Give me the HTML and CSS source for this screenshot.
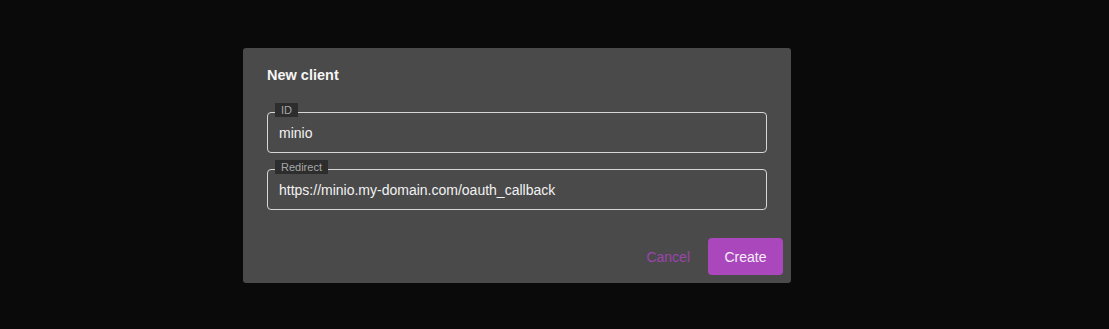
FILE: index.html
```html
<!DOCTYPE html>
<html>
<head>
<meta charset="utf-8">
<link rel="stylesheet" href="styles.css">
</head>
<body>
<div class="backdrop">
  <div class="dialog">
    <h2 class="title">New client</h2>
    <div class="fields">
      <div class="field">
        <span class="label">ID</span>
        <div class="input">minio</div>
      </div>
      <div class="field">
        <span class="label">Redirect</span>
        <div class="input">https://minio.my-domain.com/oauth_callback</div>
      </div>
    </div>
    <div class="actions">
      <button class="btn btn-text">Cancel</button>
      <button class="btn btn-primary">Create</button>
    </div>
  </div>
</div>
</body>
</html>
```
FILE: styles.css
```css
html, body {
  margin: 0;
  padding: 0;
  background: #0a0a0a;
  font-family: "Liberation Sans", Arial, sans-serif;
}
.backdrop {
  padding: 48px 0 0 243px;
}
.dialog {
  width: 548px;
  height: 235px;
  box-sizing: border-box;
  background: #4a4a4a;
  border-radius: 3px;
  padding: 19px 8px 8px 24px;
  display: flex;
  flex-direction: column;
}
.title {
  margin: 0;
  font-size: 14.5px;
  line-height: 17px;
  font-weight: bold;
  color: #f5f5f5;
}
.fields {
  display: flex;
  flex-direction: column;
  gap: 16px;
  margin-top: 28px;
  width: 500px;
}
.field {
  position: relative;
}
.label {
  position: absolute;
  left: 8px;
  top: -9px;
  height: 14px;
  line-height: 14px;
  padding: 0 6px;
  font-size: 11px;
  color: #a8a8a8;
  background: #2d2d2d;
}
.input {
  height: 41px;
  box-sizing: border-box;
  border: 1px solid #d6d6d6;
  border-radius: 4px;
  padding: 0 11px;
  display: flex;
  align-items: center;
  font-size: 14px;
  color: #f2f2f2;
}
.actions {
  margin-top: auto;
  display: flex;
  justify-content: flex-end;
  gap: 8px;
}
.btn {
  font-family: "Liberation Sans", Arial, sans-serif;
  font-size: 14px;
  height: 37px;
  border: none;
  border-radius: 4px;
  padding: 0 16px;
  cursor: pointer;
}
.btn-text {
  background: transparent;
  color: #9a45ae;
  padding: 0 10px;
}
.btn-primary {
  background: #ab47bc;
  color: #f7eefa;
  width: 75px;
}
```
